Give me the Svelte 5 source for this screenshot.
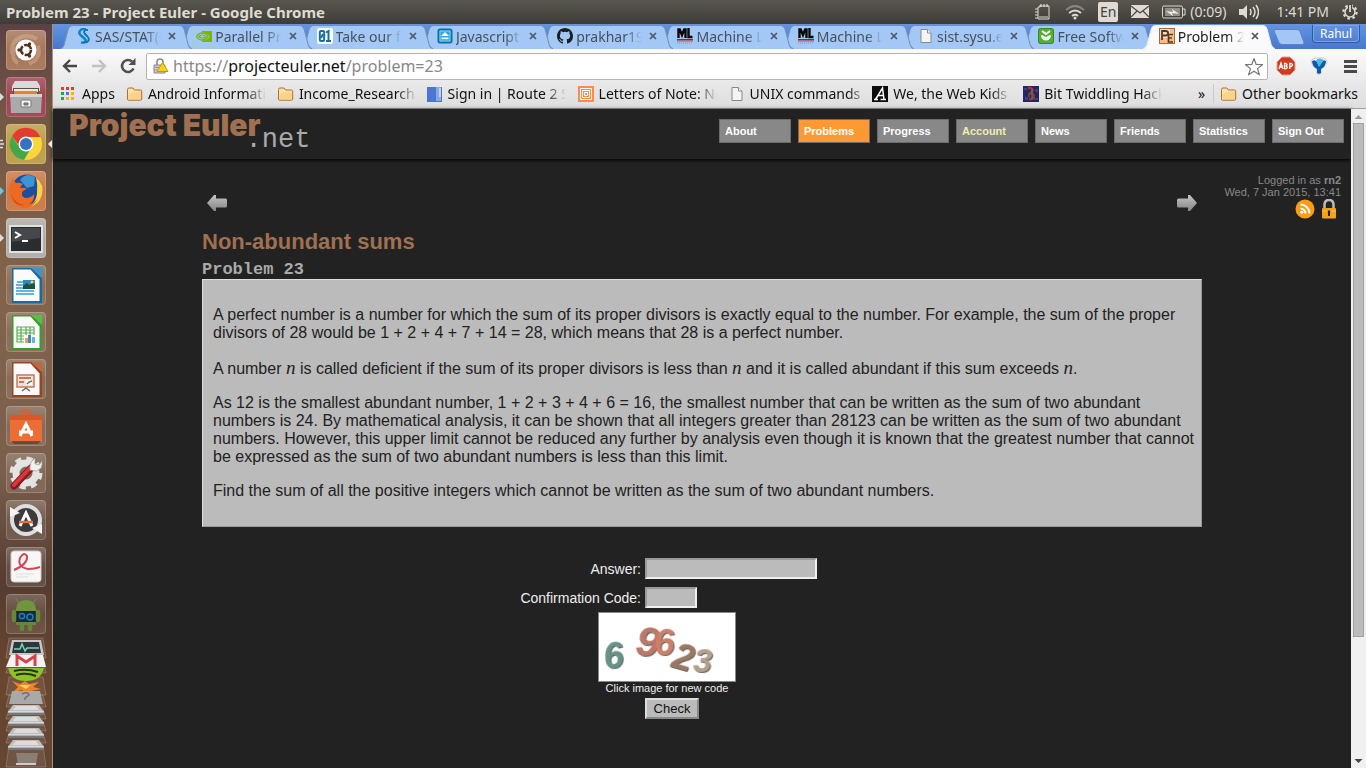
<script>
  const tabs = [
    { title: 'SAS/STAT(R) 9.2', icon: 'sas' },
    { title: 'Parallel Programming', icon: 'nvidia' },
    { title: 'Take our final exam', icon: 'zeroone' },
    { title: 'Javascript basics', icon: 'js' },
    { title: 'prakhar1989', icon: 'github' },
    { title: 'Machine Learning', icon: 'ml' },
    { title: 'Machine Learning', icon: 'ml' },
    { title: 'sist.sysu.edu.cn', icon: 'page' },
    { title: 'Free Software', icon: 'free' },
    { title: 'Problem 23', icon: 'pe', active: true }
  ];
  const bookmarks = [
    { title: 'Apps', icon: 'apps' },
    { title: 'Android Information', icon: 'folder' },
    { title: 'Income_Research', icon: 'folder' },
    { title: 'Sign in | Route 2 Shop', icon: 'blue' },
    { title: 'Letters of Note: News', icon: 'letters' },
    { title: 'UNIX commands', icon: 'page' },
    { title: 'We, the Web Kids - A', icon: 'aa' },
    { title: 'Bit Twiddling Hacks', icon: 'bit' }
  ];
  const nav = ['About', 'Problems', 'Progress', 'Account', 'News', 'Friends', 'Statistics', 'Sign Out'];
  const launcher = [
    { id: 'dash', name: 'Dash', tint: '#a06c4c' },
    { id: 'files', name: 'Files', tint: '#9a3548', left: 1 },
    { id: 'chrome', name: 'Chrome', tint: '#b8963c', left: 2, right: true },
    { id: 'firefox', name: 'Firefox', tint: '#c8703a', left: 1, blue: true },
    { id: 'terminal', name: 'Terminal', tint: '#aaa59f', left: 1 },
    { id: 'writer', name: 'Writer' },
    { id: 'calc', name: 'Calc' },
    { id: 'impress', name: 'Impress' },
    { id: 'software', name: 'Software Centre' },
    { id: 'settings', name: 'Settings' },
    { id: 'updater', name: 'Updater' },
    { id: 'reader', name: 'Document reader' },
    { id: 'android', name: 'Android Studio' }
  ];
  const digits = [
    { d: '6', x: 16, y: 55, size: 36, turn: -8, fill: '#659488' },
    { d: '9', x: 47, y: 43, size: 43, turn: 8, fill: '#bd7868' },
    { d: '6', x: 66, y: 42, size: 37, turn: -4, fill: '#cd8068' },
    { d: '2', x: 81, y: 56, size: 37, turn: 16, fill: '#9b7862' },
    { d: '3', x: 103, y: 59, size: 34, turn: 4, fill: '#b4a08c' }
  ];
  let answer = $state('');
  let code = $state('');
</script>

{#snippet favicon(name)}
  <svg class="fav" viewBox="0 0 16 16" width="16" height="16" aria-hidden="true">
    {#if name === 'sas'}
      <path d="M10 1C4 .2 1.500 4.500 5 7.500l4 3.500c2 2-.5 4-4 3.500" fill="none" stroke="#0a84c4" stroke-width="2.400" />
      <path d="M12 2C8 1.500 7 4 9 6l2.500 2.500c3 3.200.5 6.500-4 6" fill="none" stroke="#0a74b4" stroke-width="1.800" />
    {:else if name === 'nvidia'}
      <path d="M6 3h10v11H6v-1.500c4 0 6-1.500 7.500-4C11.500 6 9.500 4.500 6 4.500z" fill="#76b900" />
      <path d="M.5 8.500C2 6 4 5 6.500 5s4.500 1.500 5.500 3.500C10.500 10.500 9 12 6.500 12S2 11 .5 8.500z" fill="none" stroke="#76b900" stroke-width="1.300" />
      <path d="M3 8.500C4 7.300 5.200 7 6.500 7S9 7.600 9.500 8.500C8.500 9.700 7.800 10 6.500 10S4 9.700 3 8.500z" fill="none" stroke="#76b900" stroke-width="1.200" />
    {:else if name === 'zeroone'}
      <rect width="16" height="16" rx="2" fill="#fff" />
      <rect x="2.800" y="3" width="4.400" height="10" rx="1.500" fill="none" stroke="#15709e" stroke-width="2" />
      <path d="M4 10l2-4M9 4.500l2.500-1.500v10M9 13h5" fill="none" stroke="#15709e" stroke-width="2" />
    {:else if name === 'js'}
      <rect x="1.500" y="1.500" width="13" height="13" rx="1.500" fill="#29a4dc" stroke="#0870a4" stroke-width="2" />
      <rect x="3" y="3" width="10" height="10" fill="none" stroke="#82d5f5" />
      <path d="M8 4l4 4H4zM4.500 9.500h7v1.800h-7z" fill="#fff" />
    {:else if name === 'github'}
      <path fill="#1b1f23" d="M8 0C3.580 0 0 3.580 0 8c0 3.540 2.290 6.530 5.470 7.590.4.070.55-.17.55-.38 0-.19-.01-.82-.01-1.490-2.010.37-2.530-.49-2.690-.94-.09-.23-.48-.94-.82-1.130-.28-.15-.68-.52-.01-.53.63-.01 1.080.58 1.230.82.72 1.210 1.870.87 2.330.66.07-.52.28-.87.51-1.070-1.780-.2-3.640-.89-3.640-3.950 0-.87.31-1.590.82-2.150-.08-.2-.36-1.020.08-2.120 0 0 .67-.21 2.200.82a7.600 7.600 0 0 1 4 0c1.530-1.040 2.200-.82 2.200-.82.44 1.100.16 1.920.08 2.120.51.56.82 1.270.82 2.150 0 3.070-1.870 3.750-3.650 3.950.29.25.54.73.54 1.480 0 1.070-.01 1.930-.01 2.200 0 .21.15.46.55.38A8 8 0 0 0 16 8c0-4.420-3.580-8-8-8z" />
    {:else if name === 'ml'}
      <path d="M1.500 10V1.500h1.200L5 7l2.200-5.500h1.300V10M11.500 0v9h4" fill="none" stroke="#080808" stroke-width="2.400" />
      <path d="M0 11h16v1.500H0z" fill="#a41c20" /><path d="M0 13h16v1H0z" fill="#d98080" />
      <path d="M0 15h16" stroke="#98a" stroke-dasharray="1 1" />
    {:else if name === 'page'}
      <path d="M3 1.500h6.500L13 5v9.500H3z" fill="#f4f4f4" stroke="#888" /><path d="M9.500 1.500V5H13" fill="#fff" stroke="#888" />
    {:else if name === 'free'}
      <rect width="16" height="16" rx="3" fill="#348b22" /><rect x="1" y="1" width="14" height="14" rx="2" fill="#58ad35" />
      <path d="M4 3l4 3 4-3" fill="none" stroke="#fff" stroke-width="2" /><path d="M3.500 7.500Q4 12 8 12t4.500-4.500L8 9.500z" fill="#e9f6e2" stroke="#fff" />
    {:else if name === 'pe'}
      <rect width="16" height="16" fill="#f6bd86" /><path d="M0 0h11v10H0z" fill="#fbe0c4" /><rect x=".5" y=".5" width="15" height="15" fill="none" stroke="#a56a3f" />
      <path d="M3 12V3h3.500c3.500 0 3.500 4.500 0 4.500H3" fill="none" stroke="#5b3722" stroke-width="1.800" />
      <path d="M14 6.500H9.500V14H14M9.500 10H13" fill="none" stroke="#5b3722" stroke-width="1.700" />
    {:else if name === 'apps'}
      {#each ['#e33b2e', '#e33b2e', '#e33b2e', '#27a152', '#3b7ded', '#f4b400', '#27a152', '#f4b400', '#f4b400'] as c, i}
        <rect x={(i % 3) * 5} y={1 + Math.floor(i / 3) * 5} width="3" height="3" fill={c} />
      {/each}
    {:else if name === 'folder'}
      <path d="M.5 3.500Q.5 2 2 2h4l1.500 2h6q1.200 0 1.200 1.200V13q0 1.200-1.200 1.200h-12Q.5 14.200.5 13z" fill="#ffe3a6" stroke="#a5713c" />
      <path d="M1.500 8Q7 5 14 5.500v8H1.500z" fill="#fbcd7c" opacity=".7" />
    {:else if name === 'blue'}
      <rect y="1" width="15" height="15" fill="#4878d2" /><path d="M9 1h5v14H9z" fill="#8ca9df" /><path d="M12 2h2v9h-2z" fill="#c5d3ee" />
    {:else if name === 'letters'}
      <rect width="16" height="16" fill="#f98c4e" /><path d="M2.500 2.500h11v11h-11zM4.500 4.500h7v7h-7zM6.500 6.500h3v3h-3z" fill="none" stroke="#fff" />
    {:else if name === 'aa'}
      <rect width="16" height="16" fill="#0b0b0b" /><path d="M2 13.500h4M8.500 13.500H14M3.500 13.500L10.500 2l1.500 11.500M6 9.500h5" fill="none" stroke="#fff" stroke-width="1.500" />
    {:else if name === 'bit'}
      <rect width="16" height="16" fill="#26265c" /><path d="M1 2h3v2H1zM12 3h3v3h-3zM2 11h3v3H2zM11 12h4v2h-4z" fill="#3f3f86" />
      <path d="M5 2c5-1 6 4 2 5 6 1 4 7-1 6" fill="none" stroke="#b32b3c" stroke-width="2.400" /><path d="M9 3v10M6 7v4" stroke="#4a8a4a" />
    {/if}
  </svg>
{/snippet}

{#snippet doc(color, light)}
  <path d="M6 3h20l10 10v25H6z" fill={color} /><path d="M7.500 4.500h17l9 10v21.500h-26z" fill="#fafafa" /><path d="M25 3h11v10z" fill={light} />
{/snippet}

{#snippet appicon(id)}
  <svg viewBox="0 0 40 40" width="40" height="40" aria-hidden="true">
    {#if id === 'dash'}
      <path d="M8 12Q18 2 31 9M6 24Q4 12 14 9M32 16q4 12-9 18M12 33Q4 28 9 17" fill="none" stroke="#ddbfa9" stroke-width="4" opacity=".4" />
      <circle cx="20" cy="20" r="10.500" fill="#fff" /><circle cx="20" cy="20" r="5" fill="none" stroke="#55301d" stroke-width="2.600" stroke-dasharray="9 1.500" />
      <circle cx="13" cy="20" r="1.700" fill="#55301d" /><circle cx="23.500" cy="14" r="1.700" fill="#55301d" /><circle cx="23.500" cy="26" r="1.700" fill="#55301d" />
    {:else if id === 'files'}
      <path d="M6 9l3-5h22l3 5v5H6z" fill="#d9d9d9" /><path d="M7 11h26v7H7z" fill="#5a5048" /><path d="M8 12h24v3H8z" fill="#f4e7d0" /><path d="M8 14h23v4H8z" fill="#ee7d34" />
      <path d="M4 17h32l-1 19H5z" fill="#aaa" /><path d="M4 17h32v3H4z" fill="#d4d4d4" /><rect x="15" y="23" width="10" height="7" rx="1" fill="#f2f2f2" stroke="#777" /><path d="M18 26h4v2h-4z" fill="#999" stroke="#666" />
    {:else if id === 'chrome'}
      <circle cx="20" cy="20" r="16" fill="#fbd53b" /><path d="M6 12A16 16 0 0 1 34.500 13H20a7 7 0 0 0-6 10z" fill="#e23d31" />
      <path d="M6 12a16 16 0 0 0 12 24l7-12c-4 5-9 3-11 0z" fill="#44a748" /><circle cx="20" cy="20" r="7.500" fill="#fff" /><circle cx="20" cy="20" r="6" fill="#3573c2" />
    {:else if id === 'firefox'}
      <circle cx="21" cy="19" r="15.500" fill="#1d4f9c" /><path d="M14 9q6-8 15-3l-1 9-7 2z" fill="#3f94d2" />
      <path d="M30 6q9 8 6 18-3 10-13 12 7-5 8-13 1-9-1-17z" fill="#ffd045" />
      <path d="M7 7q1 4 3 5 3-1 7 1-2 1-3 4 4-1 7 1-3 1-5 3-1 6 5 6 5-1 7-4 1 7-5 10 6-1 9-6-4 10-14 10Q5 35 4 22q-1-8 3-15z" fill="#ee6a20" /><path d="M5 22q3 11 13 12-10 2-13-12z" fill="#c93a1c" />
    {:else if id === 'terminal'}
      <path d="M3 7h34v28H3z" fill="#e1e1df" /><path d="M5 9h30v24H5z" fill="#292d2e" /><path d="M6 10h28v10L6 24z" fill="#44484a" />
      <path d="M9 14l5 3-5 3M16 23h6" fill="none" stroke="#fff" stroke-width="2" />
    {:else if id === 'writer'}
      {@render doc('#1a6a9e', '#3f94c6')}
      <path d="M11 17h8M10 20h8M10 23h8M10 26h18M10 29h18" stroke="#68b2df" stroke-width="2" /><path d="M17 15h12v9H17z" fill="#2c89c6" /><path d="M17 24v-3l4-3 3 2 3-3 2 3v4z" fill="#1c5040" /><circle cx="26" cy="17" r="1.500" fill="#f6d448" />
    {:else if id === 'calc'}
      {@render doc('#3a9b30', '#58c047')}
      <path d="M11 15h17v15H11zM11 18h17M11 21h17M11 24h17M11 27h17M15 15v15M20 15v15M24 15v15" fill="none" stroke="#58b050" stroke-width="1.200" /><path d="M18 23h11v8H18z" fill="#fff" /><path d="M19 26h3v5h-3z" fill="#f0a056" /><path d="M22 23h3v8h-3z" fill="#4388c6" /><path d="M26 25h3v6h-3z" fill="#64b6dc" />
    {:else if id === 'impress'}
      {@render doc('#994521', '#bd6842')}
      <rect x="11" y="16" width="17" height="12" fill="#f5dfd2" stroke="#c3795b" stroke-width="1.500" /><path d="M13 19h12M13 23h5" stroke="#c3795b" stroke-width="2" /><path d="M20 21h6v5h-6z" fill="#fff" /><path d="M21 25l2-2 3-1M16 32l4-3 4 3" fill="none" stroke="#665" stroke-width="1.400" />
    {:else if id === 'software'}
      <path d="M15 13V6q5-4 10 0v7M18 13V8h5" fill="none" stroke="#cc6442" stroke-width="2.400" /><path d="M4 9h32v27H4z" fill="#ed6d36" /><path d="M4 9h32v5H4z" fill="#d85828" />
      <path d="M14 30l6-12 6 12M13 26h14" fill="none" stroke="#fff" stroke-width="3" /><path d="M5 35h30l-3 3H8z" fill="#4a3024" opacity=".6" />
    {:else if id === 'settings'}
      <circle cx="20" cy="20" r="14" fill="none" stroke="#e0e0df" stroke-width="5" stroke-dasharray="6 5" /><circle cx="20" cy="20" r="10" fill="none" stroke="#e4e4e3" stroke-width="7" />
      <path d="M8 33L25 15" stroke="#8c1820" stroke-width="7" stroke-linecap="round" /><path d="M8 32L24 15" stroke="#d6383e" stroke-width="4" stroke-linecap="round" /><path d="M24 17q-1-8 5-12v6l4 1 3-4q1 8-6 10z" fill="#f1f1f1" stroke="#999" stroke-width=".7" />
    {:else if id === 'updater'}
      <circle cx="20" cy="20" r="14" fill="#3b3b3b" stroke="#dedede" stroke-width="4" /><path d="M4 7v10l10-4zM36 34V24l-10 4z" fill="#f5f5f5" /><path d="M14 26l6-13 6 13" fill="none" stroke="#fff" stroke-width="3" /><path d="M13 22h14" stroke="#ef6b34" stroke-width="2.500" />
    {:else if id === 'reader'}
      <rect x="5" y="4" width="30" height="31" rx="3" fill="#f7f7f7" stroke="#ccc" /><path d="M8 23Q22 17 21 9q-3-5-7 2-3 9 8 11 7 0 12-2" fill="none" stroke="#d84455" stroke-width="2" /><path d="M10 27h18M10 30h12" stroke="#ddd" />
    {:else if id === 'android'}
      <path d="M10 17q0-11 10-11t10 11z" fill="#73943f" /><path d="M10 17h20v14H10z" fill="#192831" /><path d="M8 18v8M32 18v8M16 31v4M24 31v4" stroke="#66863a" stroke-width="4.500" stroke-linecap="round" /><path d="M13 9l-3-4M27 9l3-4" stroke="#73943f" /><circle cx="16" cy="22" r="2.600" fill="none" stroke="#1582c4" stroke-width="1.500" /><circle cx="24" cy="23" r="3" fill="none" stroke="#1582c4" stroke-width="1.500" /><path d="M10 28h20v3H10z" fill="#66863a" />
    {/if}
  </svg>
{/snippet}

<div class="desktop">
  <header class="panel">
    <strong class="wintitle">Problem 23 - Project Euler - Google Chrome</strong>
    <div class="tray">
      <svg viewBox="0 0 18 18" width="18" height="18" aria-hidden="true"><path d="M4 4h2V2M6 3h9v13H4M4 16V4" fill="none" stroke="#dfdbd2" /><path d="M1 6h3M1 9h3M1 12h3M1 15h3M7 1v3M10 1v3M13 1v3M5 14h9" stroke="#dfdbd2" stroke-width="1.200" /></svg>
      <svg viewBox="0 0 20 16" width="20" height="16" aria-hidden="true"><g fill="none" stroke="#dfdbd2" stroke-width="1.800"><path d="M1 6q9-8 18 0" opacity=".4" /><path d="M4 9q6-5 12 0M7 12q3-2.500 6 0" /></g><circle cx="10" cy="14" r="1.500" fill="#dfdbd2" /></svg>
      <span class="lang">En</span>
      <svg viewBox="0 0 18 13" width="18" height="13" aria-hidden="true"><path d="M0 0h18v13H0z" fill="#dfdbd2" /><path d="M0 1l9 7 9-7M0 12l6-6M18 12l-6-6" fill="none" stroke="#4a4843" stroke-width="1.200" /></svg>
      <svg viewBox="0 0 24 14" width="24" height="14" aria-hidden="true"><rect x=".5" y="1" width="20" height="12" rx="1.500" fill="none" stroke="#dfdbd2" /><path d="M3 3h15v8H3z" fill="#928f88" /><path d="M21 4h2v6h-2" fill="none" stroke="#dfdbd2" /><path d="M4 6l7 1-1-3 7 5-7-1 1 3z" fill="#eee" /></svg>
      <span class="rem">(0:09)</span>
      <svg class="t-vol" viewBox="0 0 20 16" width="20" height="16" aria-hidden="true"><path d="M0 5h4l4-4v14l-4-4H0z" fill="#dfdbd2" /><path d="M11 5q2 3 0 6M14 3q4 5 0 10M17 1q5 7 0 14" fill="none" stroke="#dfdbd2" stroke-width="1.500" /></svg>
      <span class="clock">1:41 PM</span>
      <svg viewBox="0 0 16 16" width="16" height="16" aria-hidden="true"><circle cx="8" cy="8" r="6.600" fill="none" stroke="#dfdbd2" stroke-width="2.200" stroke-dasharray="2.600 2.580" /><circle cx="8" cy="8" r="5" fill="none" stroke="#dfdbd2" stroke-width="1.500" /><path d="M8 0v8" stroke="#4a4843" stroke-width="4" /><path d="M8 1v7" stroke="#dfdbd2" stroke-width="1.800" /></svg>
    </div>
  </header>

  <div class="work">
    <aside class="launcher">
      {#each launcher as app}
        <button class="tile" style:--tint={app.tint ?? 'transparent'} aria-label={app.name}>
          {#if app.left}<svg class="mark" viewBox="0 0 4 10" width="4" height="10" aria-hidden="true">{#if app.left === 2}<path d="M0 1.500h3M0 5h4M0 8.500h3" stroke="#ddd" stroke-width="1.500" />{:else}<path d="M0 1l4 4-4 4z" fill={app.blue ? '#6ac6f2' : '#ddd'} />{/if}</svg>{/if}
          {@render appicon(app.id)}
          {#if app.right}<svg class="mark here" viewBox="0 0 4 8" width="4" height="8" aria-hidden="true"><path d="M4 0v8L0 4z" fill="#eee" /></svg>{/if}
        </button>
      {/each}
      <svg class="stack" viewBox="0 0 44 132" width="44" height="132" aria-hidden="true">
        <g fill="#fff" fill-opacity=".08" stroke="#fff" stroke-opacity=".2"><path d="M5 1h34l3 20H2zM5 22h34l3 14H2zM5 40h34l3 18H2zM5 58h34l3 12H2zM5 72h34l3 10H2zM5 84h34l3 10H2zM5 96h34l3 10H2zM5 108h34l3 22H2z" /></g>
        <path d="M8 3h29l3 15H5z" fill="#c8c8c8" /><path d="M10 5h25l2 11H8z" fill="#2e3637" /><path d="M10 12h6l2-5 3 7 2-3h12" fill="none" stroke="#72d5c0" stroke-width="1.500" />
        <path d="M7 18h32l3 12H2z" fill="#f3f3f3" /><path d="M13 29V19l9 6 9-6v10" fill="none" stroke="#d7424a" stroke-width="3" />
        <path d="M4 31h36q-3 13-18 13T4 31z" fill="#8dc127" /><path d="M10 34q12-3 24 1M12 38q10-3 20 1" fill="none" stroke="#253310" stroke-width="2" />
        <path d="M8 44l8 3 5-3 4 3 10-2-6 5 8 2-10 2-5 3-4-4-9 2 5-5z" fill="#ee832d" /><path d="M15 48h12l-5 4z" fill="#ffd260" />
        <path d="M8 54h28l3 13H5z" fill="#a9a9a9" /><path d="M18 57q6-3 7 1l-4 3v2" fill="none" stroke="#707070" stroke-width="1.500" />
        {#each [68, 79, 91, 103] as y}<path d={`M9 ${y}h26l5 7H4z`} fill="#bfbfbf" /><path d={`M12 ${y + 1}h20l3 4H9z`} fill="#ddd" /><path d={`M4 ${y + 7}h36v3H4z`} fill="#777" /><path d={`M4 ${y + 7}h36`} stroke="#f1f1f1" />{/each}
        <path d="M12 116h22l-2 12H14z" fill="#8b7f74" /><path d="M12 127h20" stroke="#ccc" stroke-width="2" />
      </svg>
    </aside>

    <div class="browser">
      <div class="strip">
        <div class="tabs">
          {#each tabs as tab, i}
            <div class="tab" class:active={tab.active} style:z-index={tab.active ? 20 : 10 - i}>
              <svg class="shape" viewBox="0 0 132 24" preserveAspectRatio="none" aria-hidden="true"><path d="M0 24Q3 23 4 20L8 5Q9 .5 13 .5H119Q123 .5 124 5L128 20Q129 23 132 24" /></svg>
              {@render favicon(tab.icon)}
              <span class="tabtitle">{tab.title}</span>
              <button class="close" aria-label="Close tab"><svg viewBox="0 0 8 8" width="8" height="8" aria-hidden="true"><path d="M1 1l6 6M7 1L1 7" stroke="#4c5663" stroke-width="1.700" /></svg></button>
            </div>
          {/each}
        </div>
        <svg class="newtab" viewBox="0 0 32 16" width="32" height="16" aria-hidden="true"><path d="M1 2Q1 .5 3 .5h21q2 0 3 2l4 11q0 2-2 2H9q-2 0-3-2z" fill="#a4c6f4" stroke="#5b83c4" /></svg>
        <button class="user">Rahul</button>
      </div>

      <div class="toolbar">
        <button class="ic" aria-label="Back"><svg viewBox="0 0 16 14" width="16" height="14"><path d="M15 7H2M8 1L2 7l6 6" fill="none" stroke="#484848" stroke-width="2.400" /></svg></button>
        <button class="ic" aria-label="Forward"><svg viewBox="0 0 16 14" width="16" height="14"><path d="M1 7h13M8 1l6 6-6 6" fill="none" stroke="#c2c2c2" stroke-width="2.400" /></svg></button>
        <button class="ic reload" aria-label="Reload"><svg viewBox="0 0 16 16" width="16" height="16"><path d="M13.500 10.500A6 6 0 1 1 12 3.500" fill="none" stroke="#505050" stroke-width="2.600" /><path d="M15.500 0v7H8.500z" fill="#505050" /></svg></button>
        <div class="omni">
          <svg viewBox="0 0 16 16" width="16" height="16" aria-hidden="true"><path d="M4 8V4q0-3 3-3t3 3v4" fill="none" stroke="#888" stroke-width="1.600" /><path d="M1 7h11v8H1z" fill="#ccc" stroke="#888" /><path d="M1 9.500h11M1 12h11" stroke="#999" /><path d="M9.500 4.500l5.500 9H4z" fill="#fcd116" stroke="#c79900" stroke-linejoin="round" /></svg>
          <span class="url">https://<b>projecteuler.net</b>/problem=23</span>
          <svg viewBox="0 0 20 19" width="20" height="19" aria-hidden="true"><path d="M10 1.500l2.200 6 6.300.2-5 3.900 1.900 6.200L10 14.200l-5.400 3.600 1.900-6.200-5-3.900 6.300-.2z" fill="#fff" stroke="#777" stroke-width="1.200" stroke-linejoin="round" /></svg>
        </div>
        <svg class="abp" viewBox="0 0 20 20" width="20" height="20" aria-hidden="true"><path d="M6 1h8l5 5v8l-5 5H6l-5-5V6z" fill="#d13a1e" stroke="#e9a090" /><path d="M3 13l2-6 2 6M3.500 11h3M8.500 13V7.500h1.500q2 1.200 0 2.500 2.500 1.200 0 2.800H8.500M13.800 13V7.500h1.500q2.500 1.500 0 3h-1.500" fill="none" stroke="#fff" stroke-width="1.300" /></svg>
        <svg class="vee" viewBox="0 0 18 18" width="18" height="18" aria-hidden="true"><path d="M1 5q0-3 4-4h8q4 1 4 4-1 5-6 7v5H7v-5Q2 10 1 5z" fill="#fff" stroke="#ccc" /><path d="M2 4q3-2 5 1l2 4 2-4q2-3 5-1 0 5-5 8v4l-2 1-2-1v-4Q2 9 2 4z" fill="#0d5cab" /><path d="M6 3q3-3 8 0l-5 7z" fill="#4fb6f2" /></svg>
        <button class="ic menu" aria-label="Menu"><svg viewBox="0 0 13 13" width="13" height="13"><path d="M0 1.500h13M0 6.500h13M0 11.500h13" stroke="#4a4a4a" stroke-width="3" /></svg></button>
      </div>

      <div class="bookmarks">
        {#each bookmarks as b}
          <a href="#bookmark" class="bm">{@render favicon(b.icon)}<span>{b.title}</span></a>
        {/each}
        <span class="more">»</span>
        <a href="#other" class="bm other">{@render favicon('folder')}<span>Other bookmarks</span></a>
      </div>

      <div class="view">
        <div class="page">
          <header class="site">
            <div class="logo"><span class="name">Project Euler</span><span class="net">.net</span></div>
            <nav>
              {#each nav as n}<a href="#nav" class:on={n === 'Problems'} class:acc={n === 'Account'}>{n}</a>{/each}
            </nav>
          </header>
          <div class="cols">
            <main>
              <div class="arrows">
                <svg viewBox="0 0 20 16" width="20" height="16" role="img" aria-label="Previous"><path d="M0 8l7-8h2v3.500h9.500q1.500 0 1.500 1.500v6q0 1.500-1.500 1.500H9V16H7z" fill="url(#steel)" /></svg>
                <svg viewBox="0 0 20 16" width="20" height="16" role="img" aria-label="Next"><defs><linearGradient id="steel" x2="0" y2="1"><stop stop-color="#c4c4c4" /><stop offset="1" stop-color="#858585" /></linearGradient></defs><path d="M20 8l-7-8h-2v3.500H1.500Q0 3.500 0 5v6q0 1.500 1.500 1.500H11V16h2z" fill="url(#steel)" /></svg>
              </div>
              <h2>Non-abundant sums</h2>
              <h3>Problem 23</h3>
              <div class="content">
                <p>A perfect number is a number for which the sum of its proper divisors is exactly equal to the number. For example, the sum of the proper divisors of 28 would be 1 + 2 + 4 + 7 + 14 = 28, which means that 28 is a perfect number.</p>
                <p>A number <var>n</var> is called deficient if the sum of its proper divisors is less than <var>n</var> and it is called abundant if this sum exceeds <var>n</var>.</p>
                <p>As 12 is the smallest abundant number, 1 + 2 + 3 + 4 + 6 = 16, the smallest number that can be written as the sum of two abundant numbers is 24. By mathematical analysis, it can be shown that all integers greater than 28123 can be written as the sum of two abundant numbers. However, this upper limit cannot be reduced any further by analysis even though it is known that the greatest number that cannot be expressed as the sum of two abundant numbers is less than this limit.</p>
                <p>Find the sum of all the positive integers which cannot be written as the sum of two abundant numbers.</p>
              </div>
              <form onsubmit={(e) => e.preventDefault()}>
                <label for="answer">Answer:</label>
                <input id="answer" type="text" bind:value={answer} />
                <label for="code">Confirmation Code:</label>
                <input id="code" class="short" type="text" bind:value={code} />
                <div class="captcha">
                  <svg viewBox="0 0 136 68" width="136" height="68">
                    {#each digits as g}
                      <text class="digit" font-size={g.size} transform={`translate(${g.x} ${g.y}) rotate(${g.turn})`} fill={g.fill}>{g.d}</text>
                    {/each}
                  </svg>
                  <span>Click image for new code</span>
                </div>
                <button class="check">Check</button>
              </form>
            </main>
            <aside class="login">
              <div>Logged in as <b>rn2</b></div>
              <div>Wed, 7 Jan 2015, 13:41</div>
              <div class="badges">
                <svg viewBox="0 0 20 20" width="20" height="20" role="img" aria-label="RSS"><circle cx="10" cy="10" r="9.500" fill="#f99d16" /><path d="M5.500 9.500a5 5 0 0 1 5 5M5.500 5.500a9 9 0 0 1 9 9" fill="none" stroke="#fff" stroke-width="2" /><circle cx="6.800" cy="13.300" r="1.500" fill="#fff" /></svg>
                <svg viewBox="0 0 16 20" width="16" height="20" role="img" aria-label="Secure"><path d="M3.500 10V6q0-5 4.500-5t4.500 5v4" fill="none" stroke="#bbb" stroke-width="2.500" /><rect x="1" y="9" width="14" height="10.500" rx="1" fill="#f4a21c" /><path d="M1 12h14" stroke="#ffc04a" /><path d="M8 12v5M6.800 12.500h2.400" stroke="#222" stroke-width="2" /></svg>
              </div>
            </aside>
          </div>
        </div>
        <div class="scroll" aria-hidden="true">
          <svg viewBox="0 0 15 14" width="15" height="14"><path d="M7.500 6l4 4h-8z" fill="#999" /></svg>
          <div class="thumb"></div>
          <svg viewBox="0 0 15 14" width="15" height="14"><path d="M7.500 9l4-4h-8z" fill="#444" /></svg>
        </div>
      </div>
    </div>
  </div>
</div>

<style>
  :global(body) { background: #222; }
  * { box-sizing: border-box; }
  button { border: 0; padding: 0; background: none; font: inherit; color: inherit; }
  svg { display: block; flex: none; }
  a { color: inherit; text-decoration: none; }
  .desktop { height: 100vh; display: flex; flex-direction: column; overflow: hidden; font-family: "Noto Sans", sans-serif; font-size: 14px; }
  .panel { flex: none; height: 24px; display: flex; align-items: center; justify-content: space-between; padding: 0 8px 1px 6px; background: linear-gradient(#59574f, #3d3c38); color: #dfdbd2; }
  .wintitle { white-space: nowrap; font-size: 15px; line-height: 20px; }
  .tray { display: flex; align-items: center; gap: 13px; white-space: nowrap; }
  .lang { width: 20px; height: 20px; border-radius: 2px; background: #dfdbd2; color: #45433e; text-align: center; line-height: 20px; }
  .rem { margin-left: -9px; }
  .t-vol { margin-right: 4px; }
  .work { flex: 1; min-height: 0; display: flex; }
  .launcher { flex: none; width: 53px; overflow: hidden; padding: 6px 6px 0; display: flex; flex-direction: column; gap: 7px; border-right: 1px solid #a39382; background: linear-gradient(#5b4144, #745744 12%, #82644b 35%, #7a5f4c 60%, #553c31 75%, #69462f 88%, #644633); }
  .tile { position: relative; flex: none; width: 40px; height: 40px; border-radius: 4px; background: linear-gradient(#ffffff38, #ffffff12 50%, #ffffff1c), var(--tint); box-shadow: inset 0 0 0 1px #ffffff30; }
  .mark { position: absolute; left: -6px; top: 15px; }
  .mark.here { left: 42px; top: 16px; }
  .stack { margin: -4px 0 0 -2px; }
  .browser { flex: 1; min-width: 0; display: flex; flex-direction: column; }
  .strip { flex: none; height: 25px; display: flex; align-items: flex-start; padding: 1px 6px 0 7px; background: linear-gradient(#6494e0, #4877ce); }
  .tabs { flex: 1; min-width: 0; display: flex; }
  .tab { position: relative; flex: 1 1 0; min-width: 0; height: 24px; display: flex; align-items: center; padding: 0 4px 2px 16px; color: #46505c; }
  .shape { position: absolute; left: 0; top: 0; width: calc(100% + 12px); height: 24px; fill: #a4c8f6; stroke: #7090bc; }
  .active .shape { fill: #fafafa; stroke: #e8eef8; }
  .active { color: #222; }
  .tab .fav { position: relative; }
  .tabtitle { position: relative; flex: 1; min-width: 0; margin-left: 3px; overflow: hidden; white-space: nowrap; mask-image: linear-gradient(90deg, #000 75%, transparent); }
  .close { position: relative; width: 8px; height: 8px; margin-left: 7px; }
  .newtab { margin: 4px 0 0 10px; }
  .user { margin: 0 0 0 7px; width: 48px; height: 18px; border: 1px solid #2e5aa4; border-top: 0; border-radius: 0 0 4px 4px; color: #fff; font-size: 12px; line-height: 16px; box-shadow: inset 0 0 0 1px #7ba3e4; }
  .toolbar { flex: none; height: 32px; display: flex; align-items: center; padding: 2px 9px 0; background: linear-gradient(#fafafa, #eaeaea); }
  .ic { margin-right: 13px; }
  .reload { margin-right: 10px; }
  .menu { margin: 0; }
  .omni { flex: 1; min-width: 0; height: 27px; display: flex; align-items: center; gap: 4px; padding: 0 3px 0 6px; border: 1px solid #b4b4b4; border-radius: 2px; background: #fff; font-size: 16px; }
  .url { flex: 1; color: #888; white-space: nowrap; }
  .url b { font-weight: 400; color: #111; }
  .abp { margin: 0 14px 0 8px; }
  .vee { margin-right: 16px; }
  .bookmarks { flex: none; height: 28px; display: flex; align-items: center; gap: 12px; padding: 0 8px 2px; border-bottom: 1px solid #a0a0a0; background: linear-gradient(#e9e9e9, #dedede); color: #111; }
  .bm { flex: none; display: flex; align-items: center; gap: 5px; white-space: nowrap; }
  .bm span { max-width: 118px; overflow: hidden; mask-image: linear-gradient(90deg, #000 98px, transparent 118px); }
  .bm.other span { max-width: none; mask-image: none; }
  .more { margin-left: auto; }
  .bm.other { padding-left: 7px; margin-left: -4px; border-left: 1px solid #c5ccd4; }
  .view { flex: 1; min-height: 0; display: flex; }
  .page { flex: 1; min-width: 0; background: #222; font-family: "Liberation Sans", Arial, sans-serif; }
  .site { height: 50px; display: flex; justify-content: space-between; padding: 0 7px 0 16px; box-shadow: 0 1px 4px #000; }
  .logo { display: flex; white-space: nowrap; }
  .name { height: 32px; color: #a07050; font: 900 30px/32px Inter, sans-serif; }
  .net { margin: 17px 0 0 -15px; color: #aaa; font: 27px/28px "Liberation Mono", monospace; }
  nav { display: flex; gap: 7px; padding-top: 10px; }
  nav a { width: 72px; height: 24px; padding-left: 5px; border: 1px solid #6c6c6c; background: #888; color: #fff; font-size: 11px; font-weight: 700; line-height: 22px; }
  nav a.on { background: #f93; }
  nav a.acc { color: #eeeeaa; }
  .cols { display: grid; grid-template-columns: minmax(0, 1fr) minmax(0, 1000px) minmax(0, 1fr); }
  main { grid-column: 2; }
  .arrows { display: flex; justify-content: space-between; padding: 36px 5px 0; }
  h2 { margin: 18px 0 0; color: #a07050; font-size: 22px; line-height: 26px; }
  h3 { margin: 5px 0 0; color: #aaa; font: 700 17px/19px "Liberation Mono", monospace; }
  .content { padding: 10px 4px 10px 10px; border: 1px solid #999; border-top-color: #ddd; border-left-color: #ddd; background: #bbb; color: #222; font-size: 16px; line-height: 18px; }
  p { margin: 16px 0; }
  var { font: italic 19px/20px "Liberation Serif", serif; }
  form { display: grid; grid-template-columns: 439px 1fr; column-gap: 4px; row-gap: 8px; align-items: center; margin-top: 31px; color: #eee; font-size: 14px; }
  label { text-align: right; }
  input { width: 172px; height: 21px; border: 2px solid; border-color: #999 #eee #eee #999; background: #bbb; }
  .short { width: 52px; }
  .captcha { grid-column: 1 / 3; width: 138px; margin: -4px 0 0 396px; font-size: 11px; line-height: 13px; text-align: center; white-space: nowrap; }
  .captcha svg { box-sizing: content-box; border: 1px solid #888; background: #fff; }
  .digit { font-family: "Liberation Sans", sans-serif; font-weight: 700; font-style: italic; text-anchor: middle; filter: drop-shadow(1px 1px 0 #666); }
  .check { grid-column: 2; width: 54px; height: 21px; margin-top: -5px; border: 2px solid; border-color: #ddd #888 #888 #ddd; background: #bbb; color: #111; font-size: 13px; line-height: 16px; }
  .login { grid-column: 3; padding: 15px 10px 0 0; color: #888; font-size: 11px; line-height: 12px; text-align: right; white-space: nowrap; }
  .badges { display: flex; justify-content: flex-end; gap: 6px; padding: 1px 4px 0 0; }
  .scroll { flex: none; width: 15px; display: flex; flex-direction: column; justify-content: space-between; background: #f0f0f0; }
  .thumb { height: 78%; margin: 0 2px auto; border: 1px solid #a0a0a0; background: #bcbcbc; }
</style>
